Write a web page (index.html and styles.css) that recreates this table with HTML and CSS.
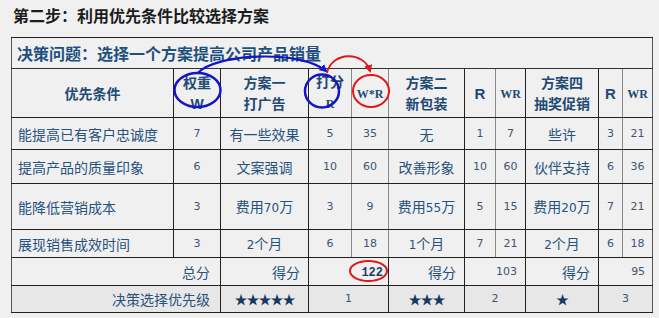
FILE: index.html
```html
<!DOCTYPE html>
<html lang="zh">
<head>
<meta charset="utf-8">
<title>第二步</title>
<link rel="stylesheet" href="styles.css">
</head>
<body>
<div class="page">
  <h1 class="step">第二步：利用优先条件比较选择方案</h1>
  <table class="grid">
    <colgroup>
      <col class="c0"><col class="c1"><col class="c2"><col class="c3"><col class="c4"><col class="c5"><col class="c6"><col class="c7"><col class="c8"><col class="c9"><col class="c10">
    </colgroup>
    <tr class="r-title"><td colspan="11" class="title">决策问题：选择一个方案提高公司产品销量</td></tr>
    <tr class="r-head">
      <th class="bk">优先条件</th>
      <th class="bk">权重<br><span class="lat">W</span></th>
      <th class="bk">方案一<br>打广告</th>
      <th class="gr">打分<br><span class="ser">R</span></th>
      <th class="gr"><span class="ser">W*R</span></th>
      <th class="bk">方案二<br>新包装</th>
      <th class="gr"><span class="lat big">R</span></th>
      <th class="bk"><span class="ser">WR</span></th>
      <th class="bk">方案四<br>抽奖促销</th>
      <th class="gr"><span class="lat big">R</span></th>
      <th><span class="ser">WR</span></th>
    </tr>
    <tr class="r1">
      <td class="lab bk">能提高已有客户忠诚度</td><td class="num bk">7</td><td class="bk">有一些效果</td><td class="num gr">5</td><td class="num gr">35</td><td class="bk">无</td><td class="num gr">1</td><td class="num bk">7</td><td class="bk">些许</td><td class="num gr">3</td><td class="num">21</td>
    </tr>
    <tr class="r2">
      <td class="lab bk">提高产品的质量印象</td><td class="num bk">6</td><td class="bk">文案强调</td><td class="num gr">10</td><td class="num gr">60</td><td class="bk">改善形象</td><td class="num gr">10</td><td class="num bk">60</td><td class="bk">伙伴支持</td><td class="num gr">6</td><td class="num">36</td>
    </tr>
    <tr class="r3">
      <td class="lab bk">能降低营销成本</td><td class="num bk">3</td><td class="bk">费用<span class="dg">70</span>万</td><td class="num gr">3</td><td class="num gr">9</td><td class="bk">费用<span class="dg">55</span>万</td><td class="num gr">5</td><td class="num bk">15</td><td class="bk">费用<span class="dg">20</span>万</td><td class="num gr">7</td><td class="num">21</td>
    </tr>
    <tr class="r4">
      <td class="lab bk">展现销售成效时间</td><td class="num bk">3</td><td class="bk"><span class="dg">2</span>个月</td><td class="num gr">6</td><td class="num gr">18</td><td class="bk"><span class="dg">1</span>个月</td><td class="num gr">7</td><td class="num bk">21</td><td class="bk"><span class="dg">2</span>个月</td><td class="num gr">6</td><td class="num">18</td>
    </tr>
    <tr class="r-total">
      <td colspan="2" class="right pr10 bk">总分</td>
      <td class="right pr8 bk">得分</td>
      <td colspan="2" class="right pr5 bk"><span class="mono">122</span></td>
      <td class="right pr8 bk">得分</td>
      <td colspan="2" class="right pr8 num bk">103</td>
      <td class="right pr8 bk">得分</td>
      <td colspan="2" class="right pr7 num">95</td>
    </tr>
    <tr class="r-rank">
      <td colspan="2" class="right pr10 bk">决策选择优先级</td>
      <td class="stars bk">★★★★★</td>
      <td colspan="2" class="num bk">1</td>
      <td class="stars bk">★★★</td>
      <td colspan="2" class="num bk">2</td>
      <td class="stars bk">★</td>
      <td colspan="2" class="num">3</td>
    </tr>
  </table>
  <svg class="marks" width="659" height="318" viewBox="0 0 659 318" aria-hidden="true">
    <defs>
      <marker id="ab" markerWidth="8" markerHeight="8" refX="6" refY="4" orient="auto" markerUnits="userSpaceOnUse">
        <path d="M0 0 L8 4 L0 8 Z" fill="#1414c8"/>
      </marker>
      <marker id="ar" markerWidth="8" markerHeight="8" refX="6" refY="4" orient="auto" markerUnits="userSpaceOnUse">
        <path d="M0 0 L8 4 L0 8 Z" fill="#e01818"/>
      </marker>
    </defs>
    <ellipse cx="197.5" cy="90" rx="23" ry="17" fill="none" stroke="#1414c8" stroke-width="2.5"/>
    <ellipse cx="322" cy="91" rx="17" ry="16.5" fill="none" stroke="#1414c8" stroke-width="2.5"/>
    <ellipse cx="371" cy="91" rx="18" ry="16" fill="none" stroke="#e01818" stroke-width="2"/>
    <ellipse cx="368.5" cy="271" rx="18.5" ry="10" fill="none" stroke="#e01818" stroke-width="2"/>
    <path d="M198 73 C 214 54, 300 49, 326 71" fill="none" stroke="#1414c8" stroke-width="2.2" marker-end="url(#ab)"/>
    <path d="M327 73 C 332 51, 364 51, 370 71" fill="none" stroke="#e01818" stroke-width="1.8" marker-end="url(#ar)"/>
  </svg>
</div>
</body>
</html>
```
FILE: styles.css
```css
html, body {
  margin: 0;
  padding: 0;
  background: #f0f0f0;
}
.page {
  position: relative;
  width: 659px;
  height: 318px;
  overflow: hidden;
  font-family: "Noto Sans CJK SC", "DejaVu Sans", sans-serif;
}
.step {
  margin: 0;
  padding: 4px 0 0 13px;
  height: 26px;
  font-size: 16px;
  line-height: 22px;
  font-weight: 700;
  color: #1c1c1c;
}
.grid {
  margin: 7px 0 0 11px;
  border-collapse: collapse;
  table-layout: fixed;
  width: 641px;
  border: 1px solid #555;
  color: #27527c;
  font-size: 14px;
}
.c0 { width: 162px; }
.c1 { width: 47px; }
.c2 { width: 88px; }
.c3 { width: 43px; }
.c4 { width: 37px; }
.c5 { width: 76px; }
.c6 { width: 31px; }
.c7 { width: 30px; }
.c8 { width: 73px; }
.c9 { width: 24px; }
.c10 { width: 30px; }
td, th {
  padding: 0;
  text-align: center;
  vertical-align: middle;
  border-top: 1px solid #222;
  border-bottom: 1px solid #222;
  white-space: nowrap;
  line-height: 18px;
}
.bk { border-right: 1px solid #222; }
.gr { border-right: 1px solid #8a8a8a; }
.r-title { height: 31px; }
.title {
  text-align: left;
  padding-left: 5px;
  font-size: 16px;
  font-weight: 700;
  color: #1f4f7e;
  border-bottom: 1px solid #333;
}
.r-head { height: 49px; }
th {
  font-weight: 700;
  color: #1f4a74;
  font-size: 14px;
  line-height: 21px;
}
.lat { font-family: "Liberation Sans", sans-serif; font-size: 14px; }
.lat.big { font-size: 15px; }
.ser { font-family: "Liberation Serif", serif; font-size: 12px; font-weight: 700; }
.r1 { height: 32px; }
.r2 { height: 34px; }
.r3 { height: 46px; }
.r4 { height: 28px; }
.r-total { height: 28px; }
.r-rank { height: 27px; background: #e7e7e7; }
.lab { text-align: left; padding-left: 6px; }
.num {
  font-family: "DejaVu Sans", sans-serif;
  font-size: 11px;
  color: #3d5670;
}
.dg { font-family: "DejaVu Sans", sans-serif; font-size: 12px; }
.right { text-align: right; }
.pr10 { padding-right: 10px; }
.pr8 { padding-right: 8px; }
.pr7 { padding-right: 7px; }
.pr5 { padding-right: 5px; }
.mono {
  font-family: "Liberation Mono", monospace;
  font-weight: 700;
  font-size: 12px;
  color: #1f3f60;
}
.stars {
  color: #17395e;
  font-size: 13px;
  letter-spacing: -1px;
}
.marks {
  position: absolute;
  left: 0;
  top: 0;
  pointer-events: none;
}
```
